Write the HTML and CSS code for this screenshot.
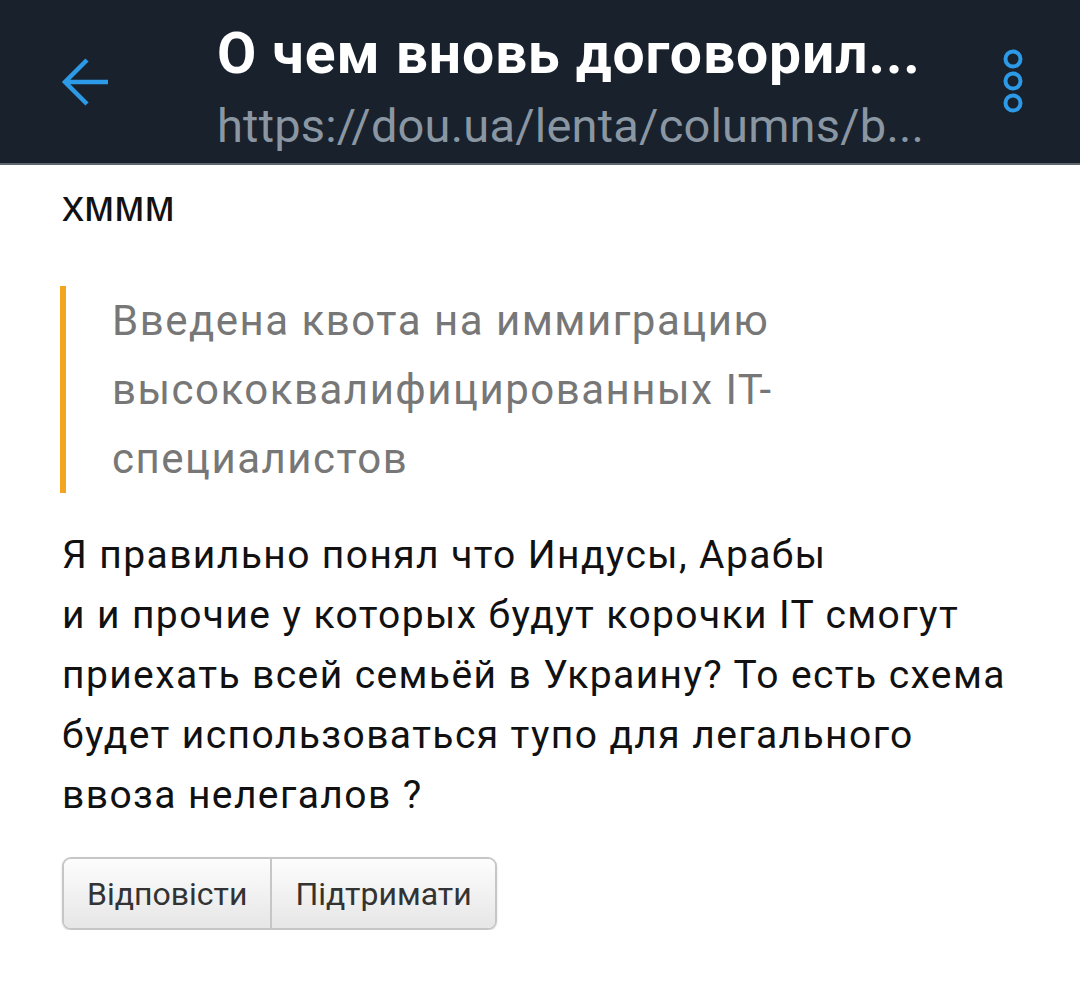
FILE: index.html
```html
<!DOCTYPE html>
<html lang="ru">
<head>
  <meta charset="UTF-8">
  <meta name="viewport" content="width=device-width, initial-scale=1.0">
  <title>О чем вновь договорились</title>
  <link rel="stylesheet" href="styles.css">
</head>
<body>
  <header class="topbar">
    <a class="back" href="#">
      <svg width="52" height="52" viewBox="0 0 52 52">
        <path d="M49 26H6M28 4L6 26l22 22" fill="none" stroke="#2d9ae8" stroke-width="4.5"/>
      </svg>
    </a>
    <div class="titles">
      <div class="title">О чем вновь договорил...</div>
      <div class="url">https://dou.ua/lenta/columns/b...</div>
    </div>
    <a class="menu" href="#">
      <svg width="24" height="70" viewBox="0 0 24 70">
        <circle cx="12" cy="12" r="7.5" fill="none" stroke="#2d9ae8" stroke-width="4"/>
        <circle cx="12" cy="34" r="7.5" fill="none" stroke="#2d9ae8" stroke-width="4"/>
        <circle cx="12" cy="56" r="7.5" fill="none" stroke="#2d9ae8" stroke-width="4"/>
      </svg>
    </a>
  </header>

  <main class="comment">
    <p class="lead">хммм</p>

    <blockquote class="quote">
      Введена квота на иммиграцию высококвалифицированных IT-специалистов
    </blockquote>

    <p class="text">
      Я правильно понял что Индусы, Арабы<br>
      и и прочие у которых будут корочки IT смогут приехать всей семьёй в Украину? То есть схема будет использоваться тупо для легального ввоза нелегалов ?
    </p>

    <div class="actions">
      <button type="button">Відповісти</button>
      <button type="button">Підтримати</button>
    </div>
  </main>
</body>
</html>
```

FILE: styles.css
```css
body {
  margin: 0;
  background: #fff;
  font-family: Roboto, "Noto Sans", sans-serif;
}
.topbar {
  height: 163px;
  background: #18212c;
  border-bottom: 2px solid #5d666f;
  display: flex;
  align-items: center;
}
.back {
  display: flex;
  width: 52px;
  margin-left: 59px;
  margin-right: 106px;
}
.titles {
  flex: 1;
  align-self: flex-start;
  margin-top: 21px;
}
.title {
  color: #fff;
  font-size: 57px;
  font-weight: bold;
  letter-spacing: 0.9px;
  line-height: 66px;
  white-space: nowrap;
}
.url {
  color: #8a96a2;
  font-size: 47px;
  letter-spacing: 0.2px;
  line-height: 66px;
  margin-top: 6px;
  white-space: nowrap;
}
.menu {
  display: flex;
  margin-right: 55px;
}
.comment {
  padding: 0 50px 0 62px;
}
.lead {
  font-family: "Liberation Sans", Arial, sans-serif;
  font-size: 44px;
  letter-spacing: 0;
  color: #111;
  margin: 14px 0 0;
  line-height: 54px;
}
.quote {
  margin: 53px 0 0 -2px;
  border-left: 6px solid #f3a521;
  padding: 0 0 0 46px;
  color: #777;
  font-size: 42px;
  letter-spacing: 1.5px;
  line-height: 69px;
}
.text {
  margin: 32px 0 0;
  font-size: 39px;
  letter-spacing: 1.4px;
  line-height: 60px;
  color: #111;
}
.actions {
  display: flex;
  width: fit-content;
  margin-top: 32px;
  border: 2px solid #c6c6c6;
  border-radius: 9px;
  overflow: hidden;
  box-shadow: 0 1px 2px rgba(0,0,0,0.15);
}
.actions button {
  font-family: Roboto, sans-serif;
  font-size: 32px;
  color: #333;
  height: 69px;
  padding: 0 23px;
  border: 0;
  background: linear-gradient(#fdfdfd, #e6e6e6);
}
.actions button + button {
  border-left: 2px solid #c6c6c6;
}
```
